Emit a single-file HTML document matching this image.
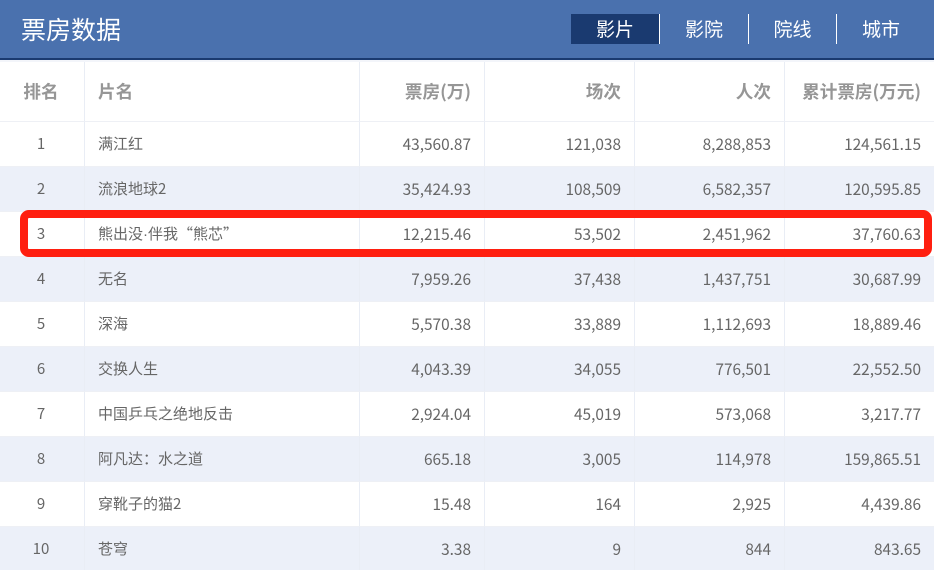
<!DOCTYPE html>
<html lang="zh"><head><meta charset="utf-8"><title>票房数据</title>
<style>
*{margin:0;padding:0;box-sizing:border-box}
html,body{width:934px;height:570px;overflow:hidden;background:#fff}
body{position:relative;font-family:"Noto Sans CJK SC","Liberation Sans",sans-serif;color:#666}
.hd{position:absolute;left:0;top:0;width:934px;height:60px;background:#4a71ae;border-bottom:2px solid #1a3a70}
.strip{position:absolute;left:0;top:60px;width:934px;height:2px;background:#f3f5fa}
.ttl{position:absolute;left:21px;top:10px;font-size:25px;line-height:38px;color:#fff}
.nav{position:absolute;top:14px;height:30px;line-height:30px;font-size:19px;color:#fff;text-align:center}
.sep{position:absolute;top:14px;width:1px;height:30px;background:#fff}
table{position:absolute;left:0;top:61.5px;width:934px;border-collapse:separate;border-spacing:0;table-layout:fixed}
th,td{overflow:hidden;white-space:nowrap;padding:0;border-right:1px solid #e9edf5;border-bottom:1px solid #eef0f5;text-align:right;padding-right:13px}
th{height:60px;font-size:17.6px;color:#969696;font-weight:bold;padding-top:1px}
td{height:45px;font-size:15px;color:#666}
td:nth-child(n+3){font-size:15.4px}
th:last-child,td:last-child{border-right:0;padding-right:13px}
th:nth-child(1),td:nth-child(1){text-align:center;padding-right:2px}
th:nth-child(2),td:nth-child(2){text-align:left;padding-left:13px;padding-right:0}
tbody tr:nth-child(even) td{background:#ecf0f9}
.d{font-family:"Liberation Sans",sans-serif}
.mark{position:absolute;left:20px;top:210px;width:912px;height:47px;border:8px solid #ff1f10;border-radius:9px}
</style></head><body>
<div class="hd"></div>
<div class="strip"></div>
<div class="ttl">票房数据</div>
<div class="nav" style="left:571px;width:88px;background:#1a3a70">影片</div>
<div class="sep" style="left:659px"></div>
<div class="nav" style="left:660px;width:88px">影院</div>
<div class="sep" style="left:748px"></div>
<div class="nav" style="left:749px;width:87px">院线</div>
<div class="sep" style="left:836px"></div>
<div class="nav" style="left:837px;width:88px">城市</div>
<table>
<colgroup><col style="width:85px"><col style="width:275px"><col style="width:125px"><col style="width:150px"><col style="width:150px"><col style="width:149px"></colgroup>
<thead><tr><th>排名</th><th>片名</th><th>票房(万)</th><th>场次</th><th>人次</th><th>累计票房(万元)</th></tr></thead>
<tbody>
<tr><td>1</td><td>满江红</td><td>43,560.87</td><td>121,038</td><td>8,288,853</td><td>124,561.15</td></tr>
<tr><td>2</td><td>流浪地球2</td><td>35,424.93</td><td>108,509</td><td>6,582,357</td><td>120,595.85</td></tr>
<tr><td>3</td><td>熊出没<span class="d">·</span>伴我“熊芯”</td><td>12,215.46</td><td>53,502</td><td>2,451,962</td><td>37,760.63</td></tr>
<tr><td>4</td><td>无名</td><td>7,959.26</td><td>37,438</td><td>1,437,751</td><td>30,687.99</td></tr>
<tr><td>5</td><td>深海</td><td>5,570.38</td><td>33,889</td><td>1,112,693</td><td>18,889.46</td></tr>
<tr><td>6</td><td>交换人生</td><td>4,043.39</td><td>34,055</td><td>776,501</td><td>22,552.50</td></tr>
<tr><td>7</td><td>中国乒乓之绝地反击</td><td>2,924.04</td><td>45,019</td><td>573,068</td><td>3,217.77</td></tr>
<tr><td>8</td><td>阿凡达：水之道</td><td>665.18</td><td>3,005</td><td>114,978</td><td>159,865.51</td></tr>
<tr><td>9</td><td>穿靴子的猫2</td><td>15.48</td><td>164</td><td>2,925</td><td>4,439.86</td></tr>
<tr><td>10</td><td>苍穹</td><td>3.38</td><td>9</td><td>844</td><td>843.65</td></tr>
</tbody></table>
<div class="mark"></div>
</body></html>
